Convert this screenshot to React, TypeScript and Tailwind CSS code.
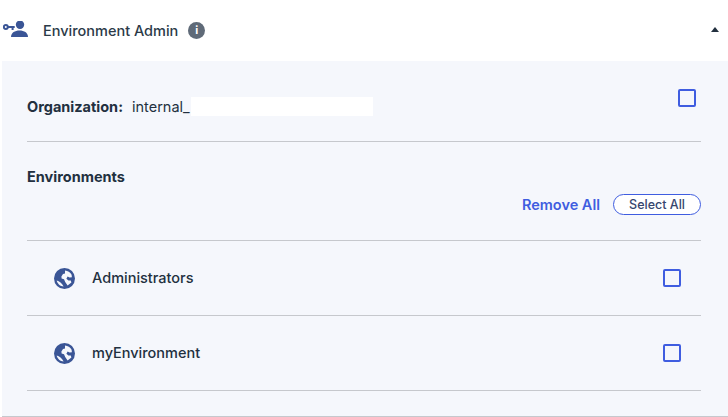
import React from "react";

const Globe = () => (
  <svg width="21" height="21" viewBox="0 0 21 21" className="shrink-0">
    <circle cx="10.5" cy="10.5" r="10.5" fill="#3a5596" />
    <path d="M11 2.6 C13.8 2.8 16.2 4.4 17.6 6.8 L17.9 9.2 L15.6 9.6 L13.6 8.6 L12.4 10.8 L14.4 12.4 L16.8 12.6 L17.4 14.6 L13.6 17.4 L11.2 14 L10 11.2 L7.6 10.6 L7.4 8.4 L9 6 L11 5.6 Z" fill="#f5f7fc" />
    <path d="M2.7 12.4 C5.2 12.8 8 15.4 9.6 18.4 C6.2 18.2 3.4 15.8 2.7 12.4 Z" fill="#f5f7fc" />
  </svg>
);

const Box = () => <div className="h-[18px] w-[18px] rounded-[2px] border-2 border-[#3f5de0]" />;

const Row = ({ name }: { name: string }) => (
  <div className="flex h-[75px] items-center justify-between border-b border-[#c6c8cd] pl-[27px] pr-[20px]">
    <div className="flex items-center gap-[17px]">
      <Globe />
      <span className="text-[14.5px] font-medium text-[#22303f]">{name}</span>
    </div>
    <Box />
  </div>
);

export default function App() {
  return (
    <div className="h-[417px] w-[728px] overflow-hidden bg-white font-['Inter',sans-serif]">
      <header className="flex h-[61px] items-center justify-between pl-[3px] pr-[9px]">
        <div className="flex items-center">
          <svg width="26" height="18" viewBox="0 0 26 18" className="mb-[1px] shrink-0">
            <circle cx="17" cy="3.7" r="4.2" fill="#3a5596" />
            <path d="M8 16 C8 11.5 12 9.4 16.5 9.4 C21 9.4 25 11.5 25 16 Z" fill="#3a5596" />
            <circle cx="2.8" cy="6" r="2" fill="none" stroke="#3a5596" strokeWidth="2" />
            <path d="M4.4 5 H11.7 V7 H10.6 V9 H8.6 V7 H4.4 Z" fill="#3a5596" />
          </svg>
          <span className="ml-[14px] text-[14.5px] font-medium text-[#2b3a48]">Environment Admin</span>
          <div className="mb-[1px] ml-[10px] flex h-[17px] w-[17px] items-center justify-center rounded-full bg-[#5f6a78] text-[11px] font-bold leading-none text-white">i</div>
        </div>
        <div className="mb-[2px] h-0 w-0 border-x-[4px] border-b-[5px] border-x-transparent border-b-[#22303f]" />
      </header>
      <main className="ml-[2px] h-[356px] border-b border-[#c6c8cd] bg-[#f5f7fc] pl-[25px] pr-[27px]">
        <div className="flex h-[81px] items-start justify-between border-b border-[#c6c8cd] pr-[5px]">
          <div className="mt-[35px] flex items-center text-[14.5px] text-[#22303f]">
            <span className="font-bold">Organization:</span>
            <span className="ml-[9px] w-[241px] bg-[linear-gradient(to_right,transparent_59px,white_59px)] leading-[19px]">internal_</span>
          </div>
          <div className="mt-[28px]"><Box /></div>
        </div>
        <div className="flex h-[99px] flex-col border-b border-[#c6c8cd]">
          <h2 className="mt-[25px] text-[14.5px] font-bold leading-[20px] text-[#22303f]">Environments</h2>
          <div className="mt-[7px] flex items-center justify-end gap-[13px]">
            <button className="text-[14.5px] font-semibold text-[#3f5de0]">Remove All</button>
            <button className="h-[21px] w-[88px] rounded-full border border-[#3f5de0] bg-white text-[12.5px] font-medium text-[#36466e]">Select All</button>
          </div>
        </div>
        <Row name="Administrators" />
        <Row name="myEnvironment" />
      </main>
    </div>
  );
}
